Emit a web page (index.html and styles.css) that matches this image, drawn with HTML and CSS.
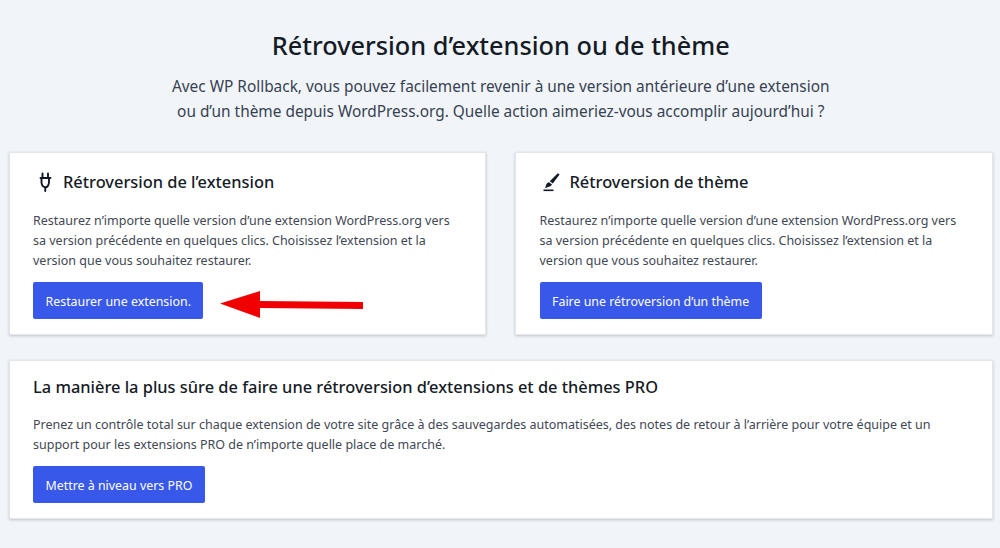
FILE: index.html
```html
<!DOCTYPE html>
<html lang="fr">
<head>
<meta charset="utf-8">
<title>WP Rollback</title>
<link rel="stylesheet" href="styles.css">
</head>
<body>
<main class="page">
  <header class="intro">
    <h1>Rétroversion d’extension ou de thème</h1>
    <p>Avec WP Rollback, vous pouvez facilement revenir à une version antérieure d’une extension<br>ou d’un thème depuis WordPress.org. Quelle action aimeriez-vous accomplir aujourd’hui ?</p>
  </header>
  <section class="columns">
    <article class="card">
      <h2><svg class="icon" viewBox="0 0 21 21" fill="none" stroke="#111827" stroke-width="1.900" stroke-linecap="round" stroke-linejoin="round"><path d="M9.500 1.500V6M15 1.500V6M7.500 6h10M8.500 6v4c0 3 1.700 5 3.750 5.300S16 13 16 10V6M12.250 15.300V19"/></svg>Rétroversion de l’extension</h2>
      <p>Restaurez n’importe quelle version d’une extension WordPress.org vers sa version précédente en quelques clics. Choisissez l’extension et la version que vous souhaitez restaurer.</p>
      <a class="btn" href="#">Restaurer une extension.</a>
      <svg class="arrow" viewBox="0 0 144 29"><path d="M0 13.500 40 1V11L143 12V19L40 18V28Z" fill="#f00000"/></svg>
    </article>
    <article class="card">
      <h2><svg class="icon" viewBox="0 0 21 21" fill="#111827"><path d="M17.800 1.300 19.600 2.600 12.800 11.600 9.800 9.300Z"/><path d="M9 10.200 12 12.500c-.6 1.200-1.800 2-3.200 2.200L5 16.300 6.500 12c.4-.8 1.400-1.500 2.500-1.800Z"/><rect x="3.500" y="17.500" width="10" height="1.600"/></svg>Rétroversion de thème</h2>
      <p>Restaurez n’importe quelle version d’une extension WordPress.org vers sa version précédente en quelques clics. Choisissez l’extension et la version que vous souhaitez restaurer.</p>
      <a class="btn" href="#">Faire une rétroversion d’un thème</a>
    </article>
  </section>
  <section class="card card-wide">
    <h2>La manière la plus sûre de faire une rétroversion d’extensions et de thèmes PRO</h2>
    <p>Prenez un contrôle total sur chaque extension de votre site grâce à des sauvegardes automatisées, des notes de retour à l’arrière pour votre équipe et un support pour les extensions PRO de n’importe quelle place de marché.</p>
    <a class="btn" href="#">Mettre à niveau vers PRO</a>
  </section>
</main>
</body>
</html>
```
FILE: styles.css
```css
* { box-sizing: border-box; }
html, body { margin: 0; height: 100%; }
body {
  background: #f1f5f9;
  color: #111827;
  font-family: "Noto Sans", "Open Sans", sans-serif;
  overflow: hidden;
}
.page { padding: 27px 7px 0 8.500px; }
.intro { text-align: center; }
.intro h1 {
  margin: 0;
  font-size: 25.300px;
  line-height: 36px;
  font-weight: 500;
  color: #151b26;
}
.intro p {
  margin: 11px 0 0;
  font-size: 15.400px;
  line-height: 25px;
  color: #374151;
}
.columns {
  display: grid;
  grid-template-columns: 477px 478px;
  column-gap: 29.500px;
  margin-top: 28px;
}
.card {
  position: relative;
  background: #fff;
  border: 1px solid #e2e5e9;
  box-shadow: 0 1px 3px rgba(0, 0, 0, .2);
  padding: 15px 24px 16px 23.500px;
  height: 183px;
}
.card h2 {
  display: flex;
  align-items: center;
  gap: 9px;
  margin: 0;
  font-size: 16.400px;
  line-height: 28px;
  font-weight: 500;
  color: #151b26;
}
.card p {
  margin: 15px 0 0;
  font-size: 12.500px;
  line-height: 20px;
  color: #3f4754;
}
.icon { width: 21px; height: 21px; flex: none; }
.btn {
  display: inline-block;
  margin-top: 11px;
  padding: 1px 12.500px 0;
  height: 37px;
  line-height: 37px;
  background: #3858e9;
  border-radius: 2px;
  color: #fff;
  font-size: 12.400px;
  text-decoration: none;
}
.arrow {
  position: absolute;
  left: 210px;
  top: 137px;
  width: 144px;
  height: 29px;
}
.card-wide {
  margin-top: 25px;
  height: 159px;
  padding-top: 12px;
}
.card-wide p { margin-top: 14px; }
.card-wide .btn { margin-top: 11px; }
```
